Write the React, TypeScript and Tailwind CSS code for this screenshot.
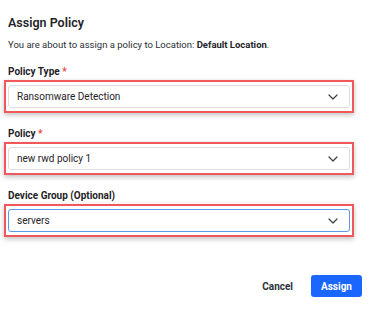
import React from "react";

function Chevron() {
  return (
    <svg width="10" height="6" viewBox="0 0 10 6" fill="none" className="shrink-0">
      <path d="M1 1 L5 5 L9 1" stroke="#3a3f45" strokeWidth="1.2" strokeLinecap="round" strokeLinejoin="round" />
    </svg>
  );
}

function Field({ label, required, value, focused }: { label: string; required?: boolean; value: string; focused?: boolean }) {
  return (
    <div className="flex flex-col">
      <div className="pl-[8px] text-[10px] font-bold text-[#1f2328] leading-[12px] h-[12px]">
        {label}
        {required && <span className="text-[#e5484d]"> *</span>}
      </div>
      <div className="mt-[2px] ml-[4px] w-[350px] h-[33px] border-2 border-[#f0585c] px-[2px] py-[3px] shadow-[0_2px_5px_rgba(0,0,0,0.25)]">
        <div
          className={
            "h-full rounded-[3px] bg-white flex items-center justify-between pl-[8px] pr-[11px] border " +
            (focused ? "border-[#5b9ae8]" : "border-[#dcdee1]")
          }
        >
          <span className="text-[10px] text-[#1f2328]">{value}</span>
          <Chevron />
        </div>
      </div>
    </div>
  );
}

export default function App() {
  return (
    <div
      className="w-[374px] h-[311px] bg-white overflow-hidden relative"
      style={{ fontFamily: "Roboto, 'Liberation Sans', Arial, sans-serif" }}
    >
      <div className="pt-[15px]">
        <div className="pl-[8px] text-[12.5px] font-semibold text-[#1f2328] leading-[16px]">Assign Policy</div>
        <div className="pl-[8px] mt-[8px] text-[9.5px] text-[#2b3036] leading-[12px]">
          You are about to assign a policy to Location: <span className="font-bold text-[#1f2328]">Default Location</span>.
        </div>
        <div className="mt-[15px] flex flex-col gap-[15px]">
          <Field label="Policy Type" required value="Ransomware Detection" />
          <Field label="Policy" required value="new rwd policy 1" />
          <Field label="Device Group (Optional)" value="servers" focused />
        </div>
        <div className="mt-[38px] flex justify-end items-center pr-[12px] gap-[18px]">
          <span className="text-[10px] font-bold text-[#2b3036]">Cancel</span>
          <div className="w-[51px] h-[22px] rounded-[3px] bg-[#1a66ff] flex items-center justify-center text-[10px] font-bold text-white">
            Assign
          </div>
        </div>
      </div>
    </div>
  );
}
